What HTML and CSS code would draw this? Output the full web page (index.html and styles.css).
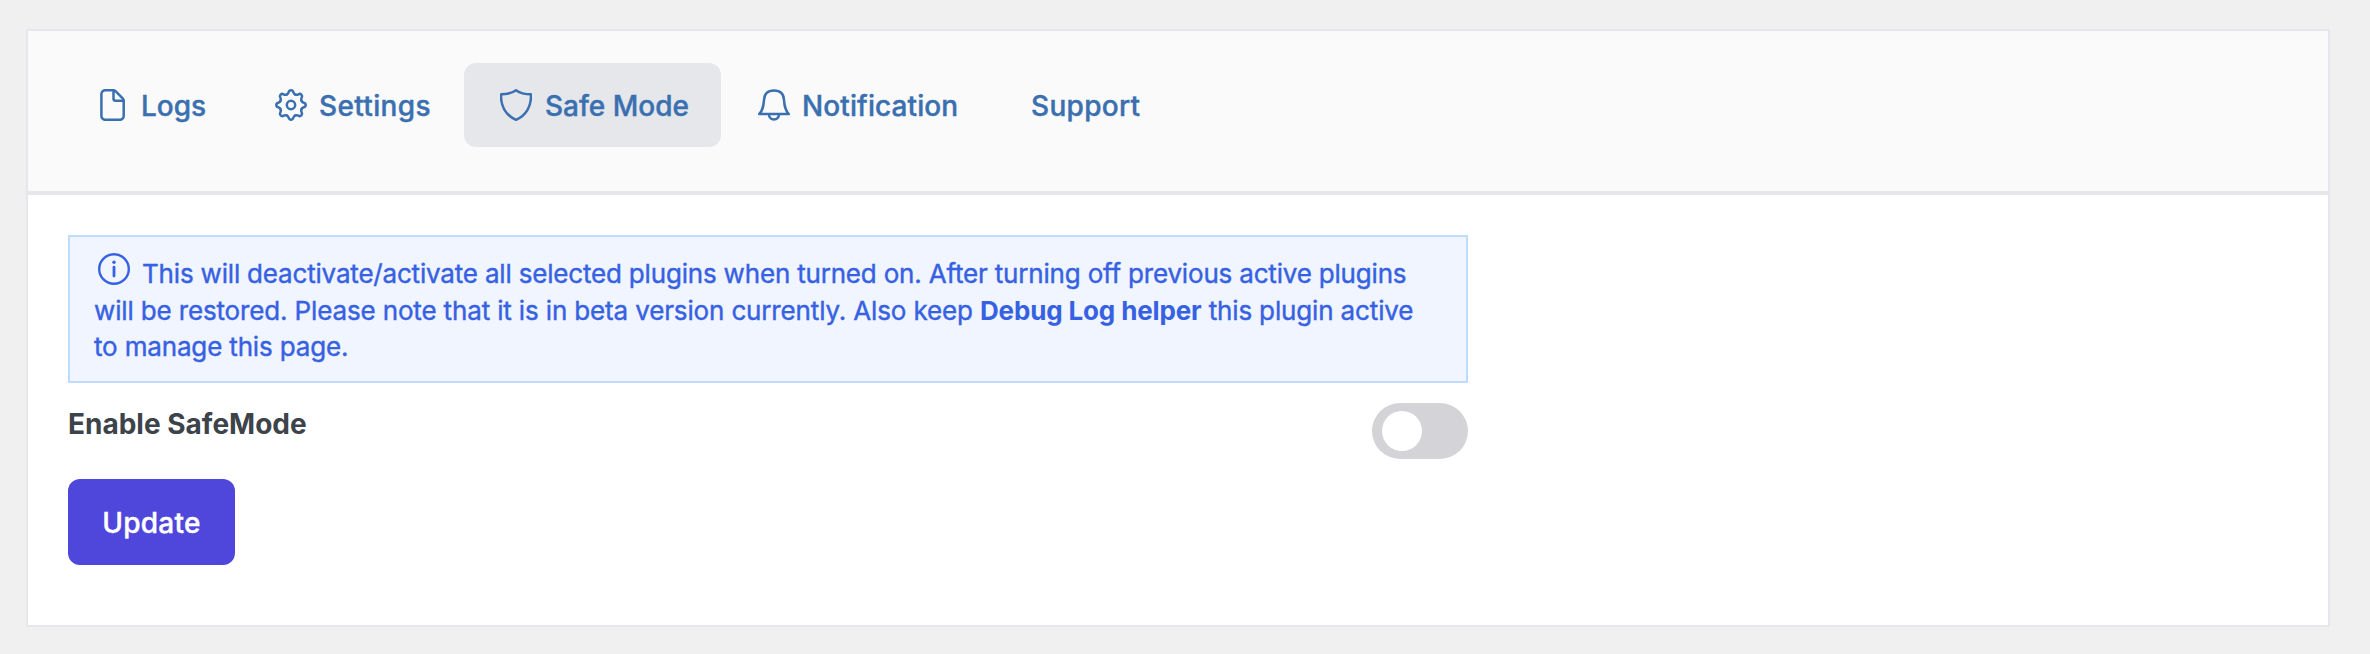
FILE: index.html
```html
<!DOCTYPE html>
<html lang="en">
<head>
<meta charset="utf-8">
<title>Safe Mode</title>
<link rel="stylesheet" href="styles.css">
</head>
<body>
<main class="card">
  <nav class="tabs">
    <a class="tab tab-logs"><svg class="icon" viewBox="0 0 32 32"><path d="M17 1.200c1 0 1.800.3 2.500 1l7.200 7.200c.7.700 1 1.500 1 2.500V27a3.800 3.800 0 0 1-3.800 3.800H9.200A3.800 3.800 0 0 1 5.400 27V5A3.800 3.800 0 0 1 9.200 1.200z"/><path d="M17.500 1.500V9.700a2 2 0 0 0 2 2h8"/></svg><span class="label">Logs</span></a>
    <a class="tab tab-settings"><svg class="icon" viewBox="-16 -16 32 32"><defs><path id="tooth" d="M-4.320-10.430C-3.100-10.900-2.600-11.800-2.300-12.800-1.900-14.300-1.200-14.700 0-14.700S1.900-14.300 2.300-12.800C2.600-11.800 3.100-10.900 4.320-10.430"/></defs><use href="#tooth"/><use href="#tooth" transform="rotate(45)"/><use href="#tooth" transform="rotate(90)"/><use href="#tooth" transform="rotate(135)"/><use href="#tooth" transform="rotate(180)"/><use href="#tooth" transform="rotate(225)"/><use href="#tooth" transform="rotate(270)"/><use href="#tooth" transform="rotate(315)"/><circle r="4.200"/></svg><span class="label">Settings</span></a>
    <a class="tab tab-safe active"><svg class="icon" viewBox="0 0 32 32"><path d="M16 1.200C12 4 6.500 5.300 1.200 5.300 .2 17 6 26.500 16 30.800 26 26.500 31.800 17 30.800 5.300 25.500 5.300 20 4 16 1.200z"/></svg><span class="label">Safe Mode</span></a>
    <a class="tab tab-notification"><svg class="icon" viewBox="0 0 32 32"><path d="M1.200 25C5 21 5.500 17 6 11 6.300 4.500 10 1.500 16 1.500S25.700 4.500 26 11c.5 6 1 10 4.800 14z"/><path d="M11 25.500a5 5 0 0 0 10 0"/></svg><span class="label">Notification</span></a>
    <a class="tab tab-support"><span class="label">Support</span></a>
  </nav>
  <section class="content">
    <div class="notice"><svg class="info" viewBox="0 0 32 32"><circle cx="16" cy="16" r="14.800"/><path class="stem" d="M16 14.200v8.800"/><circle class="dot" cx="16" cy="9.300" r="1.700"/></svg><span class="line line-1">This will deactivate/activate all selected plugins when turned on. After turning off previous active plugins</span><br><span class="line line-2">will be restored. Please note that it is in beta version currently. Also keep <b>Debug Log helper</b> this plugin active</span><br><span class="line line-3">to manage this page.</span></div>
    <div class="setting"><span class="setting-label">Enable SafeMode</span><span class="toggle"><span class="knob"></span></span></div>
    <button class="update"><span class="update-label">Update</span></button>
  </section>
</main>
</body>
</html>
```
FILE: styles.css
```css
* { box-sizing: border-box; }
body { margin: 0; padding: 29px 40px 27px 26px; background: #f0f0f0; font-family: Inter, "Liberation Sans", sans-serif; }
.card { height: 598px; border: 2px solid #e5e7eb; background: #fff; }
.tabs { height: 164px; padding: 32px 0 0 36px; display: flex; background: #fafafa; border-bottom: 4px solid #e5e7eb; }
.tab { height: 84px; display: flex; align-items: center; border-radius: 12px; color: #3a70b0; font-size: 28px; font-weight: 500; white-space: nowrap; padding-left: 32px; -webkit-text-stroke: 0.400px currentColor; }
.icon { width: 32px; height: 32px; margin-right: 13px; flex: none; fill: none; stroke: currentColor; stroke-width: 2.500; stroke-linejoin: round; stroke-linecap: round; }
.label { padding-top: 2px; }
.tab-logs { width: 178px; }
.tab-settings { width: 222px; padding-left: 33px; letter-spacing: 0.350px; }
.tab-settings .icon { margin-right: 12px; }
.tab-safe { width: 257px; padding-left: 36px; }
.active { background: #e5e7eb; }
.tab-notification { width: 278px; padding-left: 37px; letter-spacing: 0.100px; }
.tab-notification .icon { margin-right: 12px; }
.tab-support { letter-spacing: 0.300px; }
.content { padding: 40px; }
.notice { width: 1400px; height: 148px; padding: 19px 24px 0; border: 2px solid #bfdbfe; background: #f0f5ff; color: #3661e2; font-size: 26px; line-height: 36.500px; white-space: nowrap; -webkit-text-stroke: 0.400px currentColor; }
.notice b { font-weight: 700; -webkit-text-stroke: 0; }
.line-1 { letter-spacing: -0.185px; }
.line-2 { letter-spacing: -0.145px; }
.line-3 { letter-spacing: -0.160px; }
.info { width: 32px; height: 32px; margin: -8px 12px 0 4px; vertical-align: -2px; fill: none; stroke: currentColor; stroke-width: 2.400; stroke-linecap: round; }
.stem { stroke-width: 2.800; }
.dot { fill: currentColor; stroke: none; }
.setting { width: 1400px; display: flex; justify-content: space-between; margin-top: 20px; }
.setting-label { font-size: 28px; font-weight: 700; line-height: 42px; color: #3c434a; }
.toggle { width: 96px; height: 56px; border-radius: 28px; background: #d4d4d8; padding: 8px 10px; }
.knob { display: block; width: 40px; height: 40px; border-radius: 50%; background: #fff; }
.update { display: block; width: 167px; height: 86px; padding: 2px 0 0; margin-top: 20px; border: 0; border-radius: 12px; background: #4f46dc; color: #fff; font: 500 28px Inter, sans-serif; letter-spacing: 0.300px; -webkit-text-stroke: 0.400px currentColor; }
```
